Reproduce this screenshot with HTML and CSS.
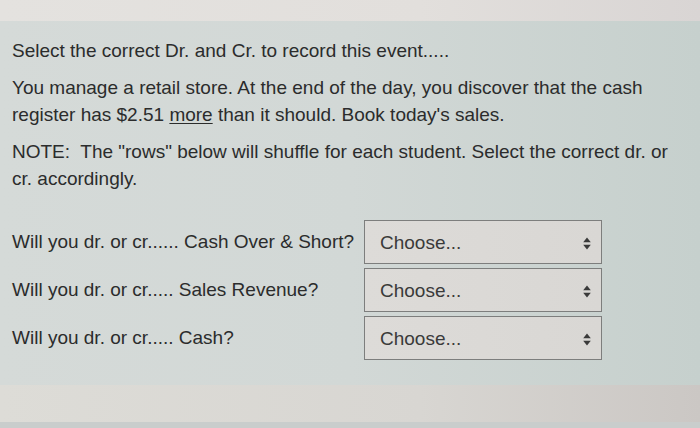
FILE: index.html
```html
<!DOCTYPE html>
<html>
<head>
<meta charset="utf-8">
<link rel="stylesheet" href="styles.css">
</head>
<body>
<div class="topbar"></div>
<div class="panel">
  <p class="line">Select the correct Dr. and Cr. to record this event.....</p>
  <p class="para">You manage a retail store. At the end of the day, you discover that the cash register has $2.51 <span class="ul">more</span> than it should. Book today's sales.</p>
  <p class="para">NOTE:&nbsp; The "rows" below will shuffle for each student. Select the correct dr. or cr. accordingly.</p>
  <div class="rows">
    <div class="row">
      <span class="label">Will you dr. or cr...... Cash Over &amp; Short?</span>
      <div class="select"><span>Choose...</span>
        <svg class="arrows" width="8" height="13" viewBox="0 0 8 13"><path d="M4 0.5 L7.8 5.2 H0.2 Z M4 12.5 L7.8 7.8 H0.2 Z" fill="#3a3a3a"/></svg>
      </div>
    </div>
    <div class="row">
      <span class="label">Will you dr. or cr..... Sales Revenue?</span>
      <div class="select"><span>Choose...</span>
        <svg class="arrows" width="8" height="13" viewBox="0 0 8 13"><path d="M4 0.5 L7.8 5.2 H0.2 Z M4 12.5 L7.8 7.8 H0.2 Z" fill="#3a3a3a"/></svg>
      </div>
    </div>
    <div class="row">
      <span class="label">Will you dr. or cr..... Cash?</span>
      <div class="select"><span>Choose...</span>
        <svg class="arrows" width="8" height="13" viewBox="0 0 8 13"><path d="M4 0.5 L7.8 5.2 H0.2 Z M4 12.5 L7.8 7.8 H0.2 Z" fill="#3a3a3a"/></svg>
      </div>
    </div>
  </div>
</div>
<div class="bottombar"></div>
<div class="footer"></div>
</body>
</html>
```
FILE: styles.css
```css
html, body {
  margin: 0;
  padding: 0;
}
body {
  width: 700px;
  height: 428px;
  overflow: hidden;
  font-family: "Liberation Sans", Arial, sans-serif;
  font-size: 19px;
  color: #2b2c2c;
  background: #d2d6d5;
}
.topbar {
  height: 21px;
  background: linear-gradient(90deg, #e4e2df 0%, #e2dfdc 60%, #d9d5d4 100%);
}
.panel {
  height: 348px;
  padding: 16px 0 0 12px;
  background: linear-gradient(90deg, #d5dad8 0%, #d2d8d6 50%, #c6d0cd 100%);
}
.line, .para {
  margin: 0 0 10px 0;
  line-height: 27px;
  max-width: 672px;
}
.ul {
  text-decoration: underline;
  text-underline-offset: 2px;
}
.rows {
  margin-top: 28px;
  display: flex;
  flex-direction: column;
  gap: 4px;
}
.row {
  display: flex;
  align-items: center;
}
.label {
  width: 352px;
  margin-top: -1px;
  white-space: nowrap;
}
.select {
  box-sizing: border-box;
  width: 238px;
  height: 44px;
  border: 1px solid #7d7e7d;
  background: linear-gradient(90deg, #dddbd8 0%, #d9d7d4 100%);
  display: flex;
  align-items: center;
  justify-content: space-between;
  padding: 2px 10px 0 15px;
  color: #3a3a3a;
}
.arrows {
  display: block;
}
.bottombar {
  height: 37px;
  background: linear-gradient(90deg, #dddcd7 0%, #d8d6d2 60%, #cbc7c4 100%);
}
.footer {
  height: 6px;
  background: #c9cdcc;
}
```
